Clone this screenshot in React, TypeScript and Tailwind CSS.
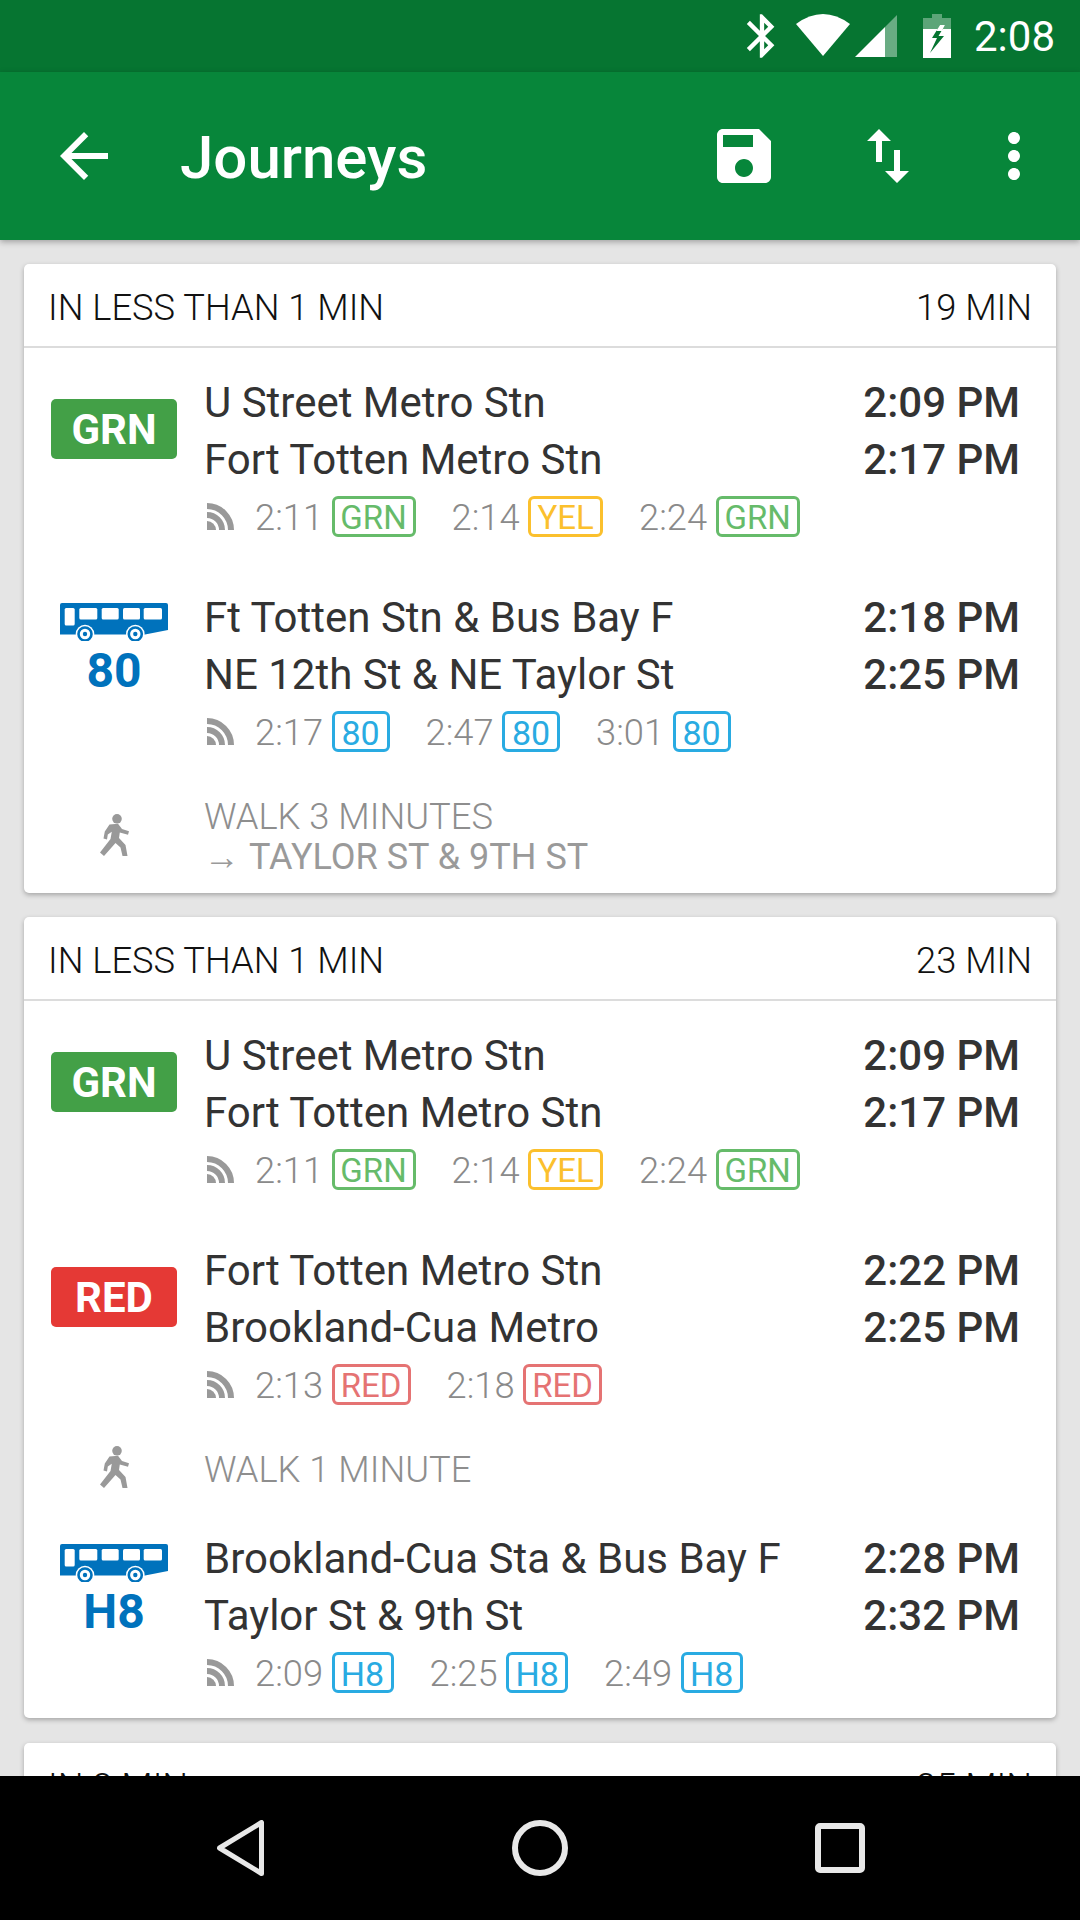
import React from "react";

const FONT = "font-['Roboto',sans-serif]";

function Rss() {
  return (
    <svg viewBox="0 0 27 27" className="w-[27px] h-[27px] shrink-0 text-[#999999]">
      <path d="M0 18 A9 9 0 0 1 9 27 H0 Z" fill="currentColor" />
      <path d="M0 12 A15 15 0 0 1 15 27" fill="none" stroke="currentColor" strokeWidth="6" />
      <path d="M0 3 A24 24 0 0 1 24 27" fill="none" stroke="currentColor" strokeWidth="6" />
    </svg>
  );
}

function Walk() {
  return (
    <svg viewBox="0 0 29 42" className="w-[29px] h-[42px] text-[#999999]" fill="currentColor">
      <circle cx="17" cy="4.8" r="4.8" />
      <path d="M9.5 10.5 L18 9.8 L22 15 L29 17.3 L28 20.8 L19.8 18.5 L19 24 L25.5 31 L27.5 42 L22.5 42 L20.5 33.5 L15.5 29 L4 42 L0 38.5 L10.5 25 L11.8 17.8 L7.8 20.5 L7 25.5 L3.5 24.5 L4.8 17.5 Z" />
    </svg>
  );
}

function Bus() {
  return (
    <svg viewBox="0 0 108 38" className="w-[108px] h-[38px] block">
      <path d="M2 0 H106 A2 2 0 0 1 108 2 V27 L85 31.5 H0 V2 A2 2 0 0 1 2 0 Z" fill="#0072bc" />
      <rect x="4.7" y="5" width="10" height="17.5" rx="1.5" fill="#fff" />
      <rect x="19.3" y="5" width="18" height="11.5" rx="1.5" fill="#fff" />
      <rect x="41.7" y="5" width="17" height="11.5" rx="1.5" fill="#fff" />
      <rect x="63" y="5" width="17" height="11.5" rx="1.5" fill="#fff" />
      <rect x="83.7" y="5" width="18.3" height="11.5" rx="1.5" fill="#fff" />
      <circle cx="25" cy="31" r="9.3" fill="#fff" />
      <circle cx="75.3" cy="31" r="9.3" fill="#fff" />
      <circle cx="25" cy="31" r="6.5" fill="none" stroke="#0072bc" strokeWidth="2.6" />
      <circle cx="75.3" cy="31" r="6.5" fill="none" stroke="#0072bc" strokeWidth="2.6" />
      <circle cx="25" cy="31" r="2.2" fill="#0072bc" />
      <circle cx="75.3" cy="31" r="2.2" fill="#0072bc" />
    </svg>
  );
}

const GRN = "border-[#66bb6a] text-[#66bb6a] w-[84px] text-[33px]";
const YEL = "border-[#fbc02d] text-[#fbc02d] w-[75px] text-[33px]";
const RED = "border-[#e57373] text-[#e57373] w-[79px] text-[33px]";
const B80 = "border-[#29abe2] text-[#29abe2] w-[58px] text-[34px]";
const BH8 = "border-[#29abe2] text-[#29abe2] w-[62px] text-[34px]";

function Realtime({ items }: { items: { t: string; label: string; cls: string }[] }) {
  return (
    <div className="h-[57px] flex items-center pl-[3px]">
      <Rss />
      <div className="flex items-center ml-[21px] gap-[36px]">
        {items.map((it, i) => (
          <div key={i} className="flex items-center gap-[8.5px]">
            <span className="pt-[2px] text-[36.3px] leading-[41px] font-light text-[#8a8a8a]">{it.t}</span>
            <span
              className={`h-[41px] pt-[2px] border-[3px] rounded-[6px] flex items-center justify-center leading-none ${it.cls}`}
            >
              {it.label}
            </span>
          </div>
        ))}
      </div>
    </div>
  );
}

function Leg({
  badge,
  bus,
  from,
  to,
  dep,
  arr,
  items,
  className,
}: {
  badge?: { label: string; cls: string };
  bus?: string;
  from: string;
  to: string;
  dep: string;
  arr: string;
  items: { t: string; label: string; cls: string }[];
  className: string;
}) {
  return (
    <div className={`flex ${className}`}>
      <div className="w-[180px] pl-[27px] shrink-0">
        {badge && (
          <div
            className={`mt-[25px] w-[126px] h-[60px] pt-[2px] rounded-[5px] flex items-center justify-center text-white text-[42px] font-bold leading-none ${badge.cls}`}
          >
            {badge.label}
          </div>
        )}
        {bus && (
          <div className="mt-[14px] w-[126px] flex flex-col items-center">
            <Bus />
            <div className="mt-[2px] text-[48px] leading-[56px] font-bold text-[#0072bc]">{bus}</div>
          </div>
        )}
      </div>
      <div className="flex-1 min-w-0 pr-[36px]">
        <div className="flex justify-between text-[42px] leading-[57px] text-[#333333]">
          <span>{from}</span>
          <span className="font-medium">{dep}</span>
        </div>
        <div className="flex justify-between text-[42px] leading-[57px] text-[#333333]">
          <span>{to}</span>
          <span className="font-medium">{arr}</span>
        </div>
        <Realtime items={items} />
      </div>
    </div>
  );
}

function Header({ left, right }: { left: string; right: string }) {
  return (
    <div className="h-[84px] shrink-0 border-b-[2px] border-[#dcdcdc] flex items-center justify-between pl-[24px] pr-[24px] pt-[6px] text-[36.3px] font-light text-[#111111] leading-none">
      <span>{left}</span>
      <span>{right}</span>
    </div>
  );
}

function Card({ className, children }: { className: string; children: React.ReactNode }) {
  return (
    <div className={`mx-[24px] bg-white rounded-[5px] shadow-[0_2px_5px_rgba(0,0,0,0.28)] flex flex-col shrink-0 ${className}`}>
      {children}
    </div>
  );
}

export default function App() {
  const grnA = [
    { t: "2:11", label: "GRN", cls: GRN },
    { t: "2:14", label: "YEL", cls: YEL },
    { t: "2:24", label: "GRN", cls: GRN },
  ];
  return (
    <div className={`w-[1080px] h-[1920px] flex flex-col overflow-hidden bg-[#e5e5e5] ${FONT}`}>
      {/* status bar */}
      <div className="h-[72px] shrink-0 bg-[#067531] flex items-center justify-end pr-[25px] text-white">
        <svg viewBox="0 0 24 24" className="w-[52px] h-[52px] mr-[8px]" fill="currentColor">
          <path d="M17.71 7.71L12 2h-1v7.59L6.41 5 5 6.41 10.59 12 5 17.59 6.41 19 11 14.41V22h1l5.71-5.71-4.3-4.29 4.3-4.29zM13 5.83l1.88 1.88L13 9.59V5.83zm1.88 10.46L13 18.17v-3.76l1.88 1.88z" />
        </svg>
        <svg viewBox="0 0 54 42" className="w-[54px] h-[42px] mr-[5px] -mt-[2px]" fill="currentColor">
          <path d="M0 10 Q27 -10 54 10 L27 42 Z" />
        </svg>
        <svg viewBox="0 0 42 42" className="w-[42px] h-[42px] mr-[26px]" fill="currentColor">
          <path d="M42 0 V42 H30 V12 Z" opacity="0.4" />
          <path d="M30 12 V42 H0 Z" />
        </svg>
        <svg viewBox="0 0 28 44" className="w-[28px] h-[44px] mr-[23px]">
          <path d="M9 0 H19 V4 H28 V15 H0 V4 H9 Z" fill="#fff" opacity="0.35" />
          <path d="M0 15 H28 V44 H0 Z" fill="#fff" />
          <path d="M17 11 L9 24 H14 L7 39 L21 22 H15.5 L22 11 Z" fill="#067531" />
          <path d="M17 11 L13.2 17 H18.8 L22 11 Z" fill="#fff" />
        </svg>
        <span className="pt-[2px] text-[42px] leading-none">2:08</span>
      </div>

      {/* toolbar */}
      <div className="relative z-10 h-[168px] shrink-0 bg-[#07863a] flex items-center text-white shadow-[0_2px_6px_rgba(0,0,0,0.3)]">
        <svg viewBox="0 0 24 24" className="ml-[48px] w-[72px] h-[72px]" fill="currentColor">
          <path d="M20 11H7.83l5.59-5.59L12 4l-8 8 8 8 1.41-1.41L7.83 13H20v-2z" />
        </svg>
        <span className="ml-[60px] pt-[4px] text-[60px] leading-none font-medium">Journeys</span>
        <div className="flex-1" />
        <svg viewBox="0 0 24 24" className="w-[72px] h-[72px]" fill="currentColor">
          <path d="M17 3H5c-1.11 0-2 .9-2 2v14c0 1.1.89 2 2 2h14c1.1 0 2-.9 2-2V7l-4-4zm-5 16c-1.66 0-3-1.34-3-3s1.34-3 3-3 3 1.34 3 3-1.34 3-3 3zm3-10H5V5h10v4z" />
        </svg>
        <svg viewBox="0 0 24 24" className="ml-[72px] w-[72px] h-[72px]" fill="currentColor">
          <path d="M16 17.01V10h-2v7.01h-3L15 21l4-3.99h-3zM9 3L5 6.99h3V14h2V6.99h3L9 3z" />
        </svg>
        <svg viewBox="0 0 24 24" className="ml-[54px] mr-[30px] w-[72px] h-[72px]" fill="currentColor">
          <path d="M12 8c1.1 0 2-.9 2-2s-.9-2-2-2-2 .9-2 2 .9 2 2 2zm0 2c-1.1 0-2 .9-2 2s.9 2 2 2 2-.9 2-2-.9-2-2-2zm0 6c-1.1 0-2 .9-2 2s.9 2 2 2 2-.9 2-2-.9-2-2-2z" />
        </svg>
      </div>

      {/* list */}
      <div className="flex-1 min-h-0 overflow-hidden flex flex-col pt-[24px]">
        <Card className="h-[629px]">
          <Header left="IN LESS THAN 1 MIN" right="19 MIN" />
          <Leg
            className="mt-[26px]"
            badge={{ label: "GRN", cls: "bg-[#43a047]" }}
            from="U Street Metro Stn"
            to="Fort Totten Metro Stn"
            dep="2:09 PM"
            arr="2:17 PM"
            items={grnA}
          />
          <Leg
            className="mt-[44px]"
            bus="80"
            from="Ft Totten Stn & Bus Bay F"
            to="NE 12th St & NE Taylor St"
            dep="2:18 PM"
            arr="2:25 PM"
            items={[
              { t: "2:17", label: "80", cls: B80 },
              { t: "2:47", label: "80", cls: B80 },
              { t: "3:01", label: "80", cls: B80 },
            ]}
          />
          <div className="flex mt-[36px]">
            <div className="w-[180px] pl-[27px] shrink-0">
              <div className="w-[126px] flex justify-center pt-[18px]">
                <Walk />
              </div>
            </div>
            <div className="text-[36.3px] leading-[41px] font-light text-[#8e8e8e]">
              <div>WALK 3 MINUTES</div>
              <div className="text-[36px] font-normal text-[#9a9a9a]">
                <span className="font-light">→</span>
                <span className="ml-[9px]">TAYLOR ST &amp; 9TH ST</span>
              </div>
            </div>
          </div>
        </Card>

        <Card className="mt-[24px] h-[801px]">
          <Header left="IN LESS THAN 1 MIN" right="23 MIN" />
          <Leg
            className="mt-[26px]"
            badge={{ label: "GRN", cls: "bg-[#43a047]" }}
            from="U Street Metro Stn"
            to="Fort Totten Metro Stn"
            dep="2:09 PM"
            arr="2:17 PM"
            items={grnA}
          />
          <Leg
            className="mt-[44px]"
            badge={{ label: "RED", cls: "bg-[#e53935]" }}
            from="Fort Totten Metro Stn"
            to="Brookland-Cua Metro"
            dep="2:22 PM"
            arr="2:25 PM"
            items={[
              { t: "2:13", label: "RED", cls: RED },
              { t: "2:18", label: "RED", cls: RED },
            ]}
          />
          <div className="flex items-center mt-[36px] h-[41px]">
            <div className="w-[180px] pl-[27px] shrink-0">
              <div className="w-[126px] flex justify-center -mt-[6px]">
                <Walk />
              </div>
            </div>
            <div className="text-[36.3px] leading-[41px] font-light text-[#8e8e8e]">WALK 1 MINUTE</div>
          </div>
          <Leg
            className="mt-[40px]"
            bus="H8"
            from="Brookland-Cua Sta & Bus Bay F"
            to="Taylor St & 9th St"
            dep="2:28 PM"
            arr="2:32 PM"
            items={[
              { t: "2:09", label: "H8", cls: BH8 },
              { t: "2:25", label: "H8", cls: BH8 },
              { t: "2:49", label: "H8", cls: BH8 },
            ]}
          />
        </Card>

        <Card className="mt-[25px] h-[400px]">
          <Header left="IN 8 MIN" right="25 MIN" />
        </Card>
      </div>

      {/* nav bar */}
      <div className="h-[144px] shrink-0 bg-black flex items-center text-[#e8e8e8]">
        <svg viewBox="0 0 47 56" className="ml-[217px] w-[47px] h-[56px]" fill="none" stroke="currentColor" strokeWidth="5" strokeLinejoin="round">
          <path d="M44.5 2.5 V53.5 L2.5 28 Z" />
        </svg>
        <svg viewBox="0 0 56 56" className="ml-[248px] w-[56px] h-[56px]" fill="none" stroke="currentColor" strokeWidth="6">
          <circle cx="28" cy="28" r="25" />
        </svg>
        <svg viewBox="0 0 50 50" className="ml-[247px] w-[50px] h-[50px]" fill="none" stroke="currentColor" strokeWidth="6" strokeLinejoin="round">
          <rect x="3" y="3" width="44" height="44" rx="2" />
        </svg>
      </div>
    </div>
  );
}
